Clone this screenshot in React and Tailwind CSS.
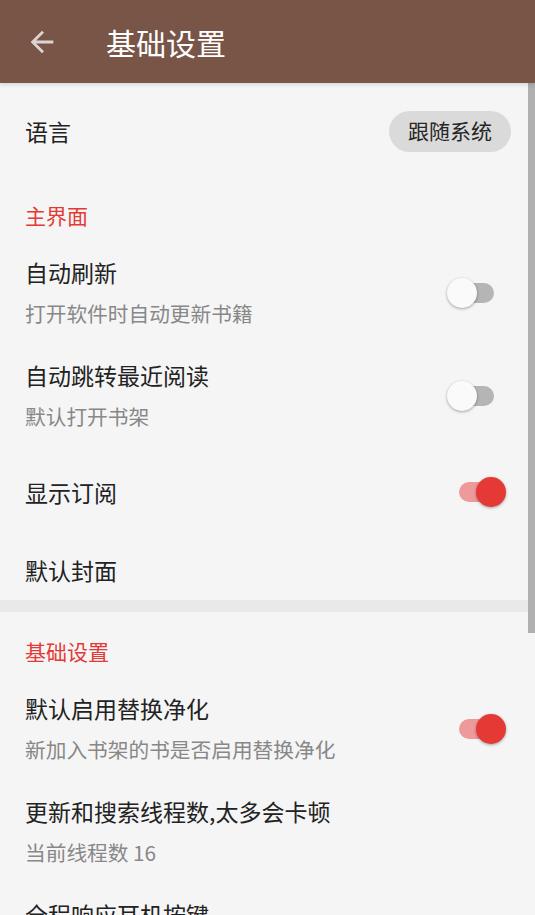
import React from 'react';

const font = { fontFamily: '"Noto Sans CJK SC", "Noto Sans", sans-serif' };

function Toggle({ on }) {
    return (
        <div className="relative w-[59px] h-[30px] mr-[5px] flex-shrink-0">
            <div className={`absolute left-[12px] top-[5px] w-[35px] h-[20px] rounded-full ${on ? 'bg-[#ef9a9a]' : 'bg-[#b5b5b5]'}`}></div>
            <div className={`absolute top-0 w-[30px] h-[30px] rounded-full shadow-[0_1px_3px_rgba(0,0,0,0.35)] ${on ? 'left-[29px] bg-[#e53935]' : 'left-0 bg-[#fafafa]'}`}></div>
        </div>
    );
}

function Category({ title, top }) {
    return (
        <div className={`px-[25px] pb-[12px] ${top}`}>
            <div className="text-[21px] leading-[28px] text-[#e53935]">{title}</div>
        </div>
    );
}

function Item({ title, summary, toggle, pad = 'py-[16px]' }) {
    return (
        <div className={`flex items-center justify-between pl-[25px] pr-[24px] ${pad}`}>
            <div className="flex flex-col min-w-0">
                <div className="text-[23px] leading-[30px] text-[#222222] whitespace-nowrap">{title}</div>
                {summary && (
                    <div className="mt-[11px] text-[20.7px] leading-[30px] text-[#888888] whitespace-nowrap">{summary}</div>
                )}
            </div>
            {toggle !== undefined && <Toggle on={toggle} />}
        </div>
    );
}

export default function App() {
    return (
        <div className="relative w-[535px] h-[915px] overflow-hidden bg-[#f5f5f5]" style={font}>
            <header className="relative z-10 flex items-center h-[83px] bg-[#795548] shadow-[0_2px_4px_rgba(0,0,0,0.12)]">
                <div className="w-[34px] h-[34px] ml-[25px] text-white/75">
                    <svg viewBox="0 0 24 24" width="34" height="34" fill="currentColor">
                        <path d="M20 11H7.83l5.59-5.59L12 4l-8 8 8 8 1.41-1.41L7.83 13H20v-2z" />
                    </svg>
                </div>
                <h1 className="ml-[47px] text-[30px] leading-[36px] text-white">基础设置</h1>
            </header>

            <main className="flex flex-col">
                <div className="flex items-center justify-between h-[96px] pl-[25px] pr-[24px]">
                    <div className="text-[23px] leading-[30px] text-[#222222]">语言</div>
                    <div className="h-[41px] px-[19px] flex items-center rounded-full bg-[#dadada] text-[21px] text-[#262626]">跟随系统</div>
                </div>

                <Category title="主界面" top="pt-[22px]" />
                <Item title="自动刷新" summary="打开软件时自动更新书籍" toggle={false} />
                <Item title="自动跳转最近阅读" summary="默认打开书架" toggle={false} />
                <Item title="显示订阅" toggle={true} pad="pt-[30px] pb-[24px]" />
                <Item title="默认封面" pad="pt-[24px] pb-[15px]" />

                <div className="h-[12px] bg-[#e9e9e9]"></div>

                <Category title="基础设置" top="pt-[25px]" />
                <Item title="默认启用替换净化" summary="新加入书架的书是否启用替换净化" toggle={true} />
                <Item title="更新和搜索线程数,太多会卡顿" summary="当前线程数 16" />
                <Item title="全程响应耳机按键" summary="全程响应耳机按键" toggle={false} />
            </main>

            {/* scrollbar */}
            <div className="absolute right-0 top-[83px] w-[7px] h-[550px] bg-[#b0b0b0]"></div>
        </div>
    );
}
